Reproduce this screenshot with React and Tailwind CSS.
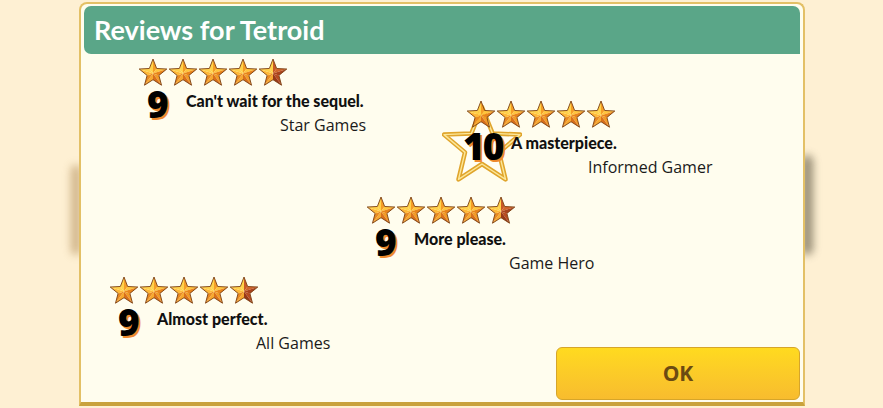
import React from "react";

// facet shading for the game-style rating star; right-hand facets go dark when the star is half
const CENTER = "15,15.5";
const facets = [
  { pts: "11.36,10.48 15,1", fill: "#FFD24A", right: false },
  { pts: "15,1 18.64,10.48", fill: "#F59E26", right: true, half: "#C95A26" },
  { pts: "18.64,10.48 28.79,11.02", fill: "#FFC53D", right: true, half: "#D0652B" },
  { pts: "28.79,11.02 20.9,17.42", fill: "#E8841A", right: true, half: "#A9421C" },
  { pts: "20.9,17.42 23.52,27.23", fill: "#F29A25", right: true, half: "#B84B20" },
  { pts: "23.52,27.23 15,21.7", fill: "#D9701A", right: true, half: "#983817" },
  { pts: "15,21.7 6.48,27.23", fill: "#F7A930", right: false },
  { pts: "6.48,27.23 9.1,17.42", fill: "#E88A20", right: false },
  { pts: "9.1,17.42 1.21,11.02", fill: "#FFB838", right: false },
  { pts: "1.21,11.02 11.36,10.48", fill: "#FFD04A", right: false },
];

const OUTLINE =
  "15,1 18.64,10.48 28.79,11.02 20.9,17.42 23.52,27.23 15,21.7 6.48,27.23 9.1,17.42 1.21,11.02 11.36,10.48";

function Star({ half }) {
  return (
    <svg width="30" height="29" viewBox="0 0 30 29" className="block">
      {facets.map((f, i) => (
        <polygon key={i} points={`${CENTER} ${f.pts}`} fill={half && f.right ? f.half : f.fill} />
      ))}
      <polygon points={OUTLINE} fill="none" stroke="#7A3E12" strokeWidth="0.9" strokeLinejoin="round" />
    </svg>
  );
}

function Stars({ score }) {
  return (
    <div className="relative z-10 flex">
      {[0, 1, 2, 3, 4].map((i) => (
        <Star key={i} half={score < 10 && i === 4} />
      ))}
    </div>
  );
}

// gold outline star shown behind a perfect score
function BadgeStar() {
  const pts =
    "40,2 50.6,28.4 78,29.6 57,47.4 63.5,74.4 40,59 16.5,74.4 23,47.4 2,29.6 29.4,28.4";
  return (
    <svg width="80" height="78" viewBox="0 0 80 78" className="absolute left-[-24px] top-[5px]">
      <polygon points={pts} fill="#FFFEF4" stroke="#E0A52C" strokeWidth="4.5" strokeLinejoin="round" />
      <polygon points={pts} fill="none" stroke="#FCE79A" strokeWidth="1.4" strokeLinejoin="round" />
    </svg>
  );
}

const reviews = [
  { score: 9, quote: "Can't wait for the sequel.", source: "Star Games", pos: "left-[57px] top-[4px]", src: "ml-[94px]" },
  { score: 10, quote: "A masterpiece.", source: "Informed Gamer", pos: "left-[385px] top-[46px]", src: "ml-[77px]" },
  { score: 9, quote: "More please.", source: "Game Hero", pos: "left-[285px] top-[142px]", src: "ml-[95px]" },
  { score: 9, quote: "Almost perfect.", source: "All Games", pos: "left-[28px] top-[222px]", src: "ml-[99px]" },
];

function Review({ r }) {
  const perfect = r.score === 10;
  return (
    <div className={`absolute ${r.pos}`}>
      {perfect && <BadgeStar />}
      <Stars score={r.score} />
      <div className="relative z-10 flex">
        <div
          className={`w-[48px] shrink-0 font-['Open_Sans',sans-serif] text-[37px] font-extrabold leading-[38px] tracking-[-2px] text-black [text-shadow:2px_2px_0_#EE8A2E] ${
            perfect ? "-ml-[3px] mt-[-2px]" : "pl-[9px] mt-[-2px]"
          }`}
        >
          {r.score}
        </div>
        <div className="pt-[4px]">
          <p className="whitespace-nowrap font-['Lato',sans-serif] text-[16px] font-black leading-[20px] text-[#111]">
            {r.quote}
          </p>
          <p className={`mt-[3px] whitespace-nowrap font-['Open_Sans',sans-serif] text-[16px] leading-[22px] text-[#1a1a1a] ${r.src}`}>
            {r.source}
          </p>
        </div>
      </div>
    </div>
  );
}

export default function App() {
  return (
    <div className="relative h-[408px] w-[883px] overflow-hidden bg-[#FEF0D3]">
      {/* soft shadows cast on the backdrop either side of the dialog */}
      <div className="absolute left-[71px] top-[165px] h-[90px] w-[10px] rounded-full bg-[#B08A55] opacity-60 blur-[4px]" />
      <div className="absolute left-[801px] top-[155px] h-[100px] w-[12px] rounded-full bg-[#6E6650] opacity-70 blur-[4px]" />

      <div className="absolute left-[79px] top-[2px] flex h-[404px] w-[726px] flex-col rounded-t-[8px] border-x-[2px] border-t-[2px] border-b-[4px] border-[#E3C066] border-b-[#C9A23C] bg-[#FFFDEE]">
        <div className="mx-[3px] mt-[2px] flex h-[48px] items-center rounded-[7px] rounded-br-none bg-[#5AA688] pl-[10px]">
          <h1 className="font-['Lato',sans-serif] text-[27px] font-bold text-white">Reviews for Tetroid</h1>
        </div>

        <div className="relative flex-1">
          {reviews.map((r) => (
            <Review key={r.source} r={r} />
          ))}
        </div>

        <div className="flex justify-end pb-[2px] pr-[3px]">
          <button className="flex h-[53px] w-[244px] items-center justify-center rounded-[6px] border border-[#D6A52A] bg-gradient-to-b from-[#FFDA1F] to-[#F8BC2E] font-['Open_Sans',sans-serif] text-[21px] font-bold text-[#6B4A12]">
            OK
          </button>
        </div>
      </div>
    </div>
  );
}
